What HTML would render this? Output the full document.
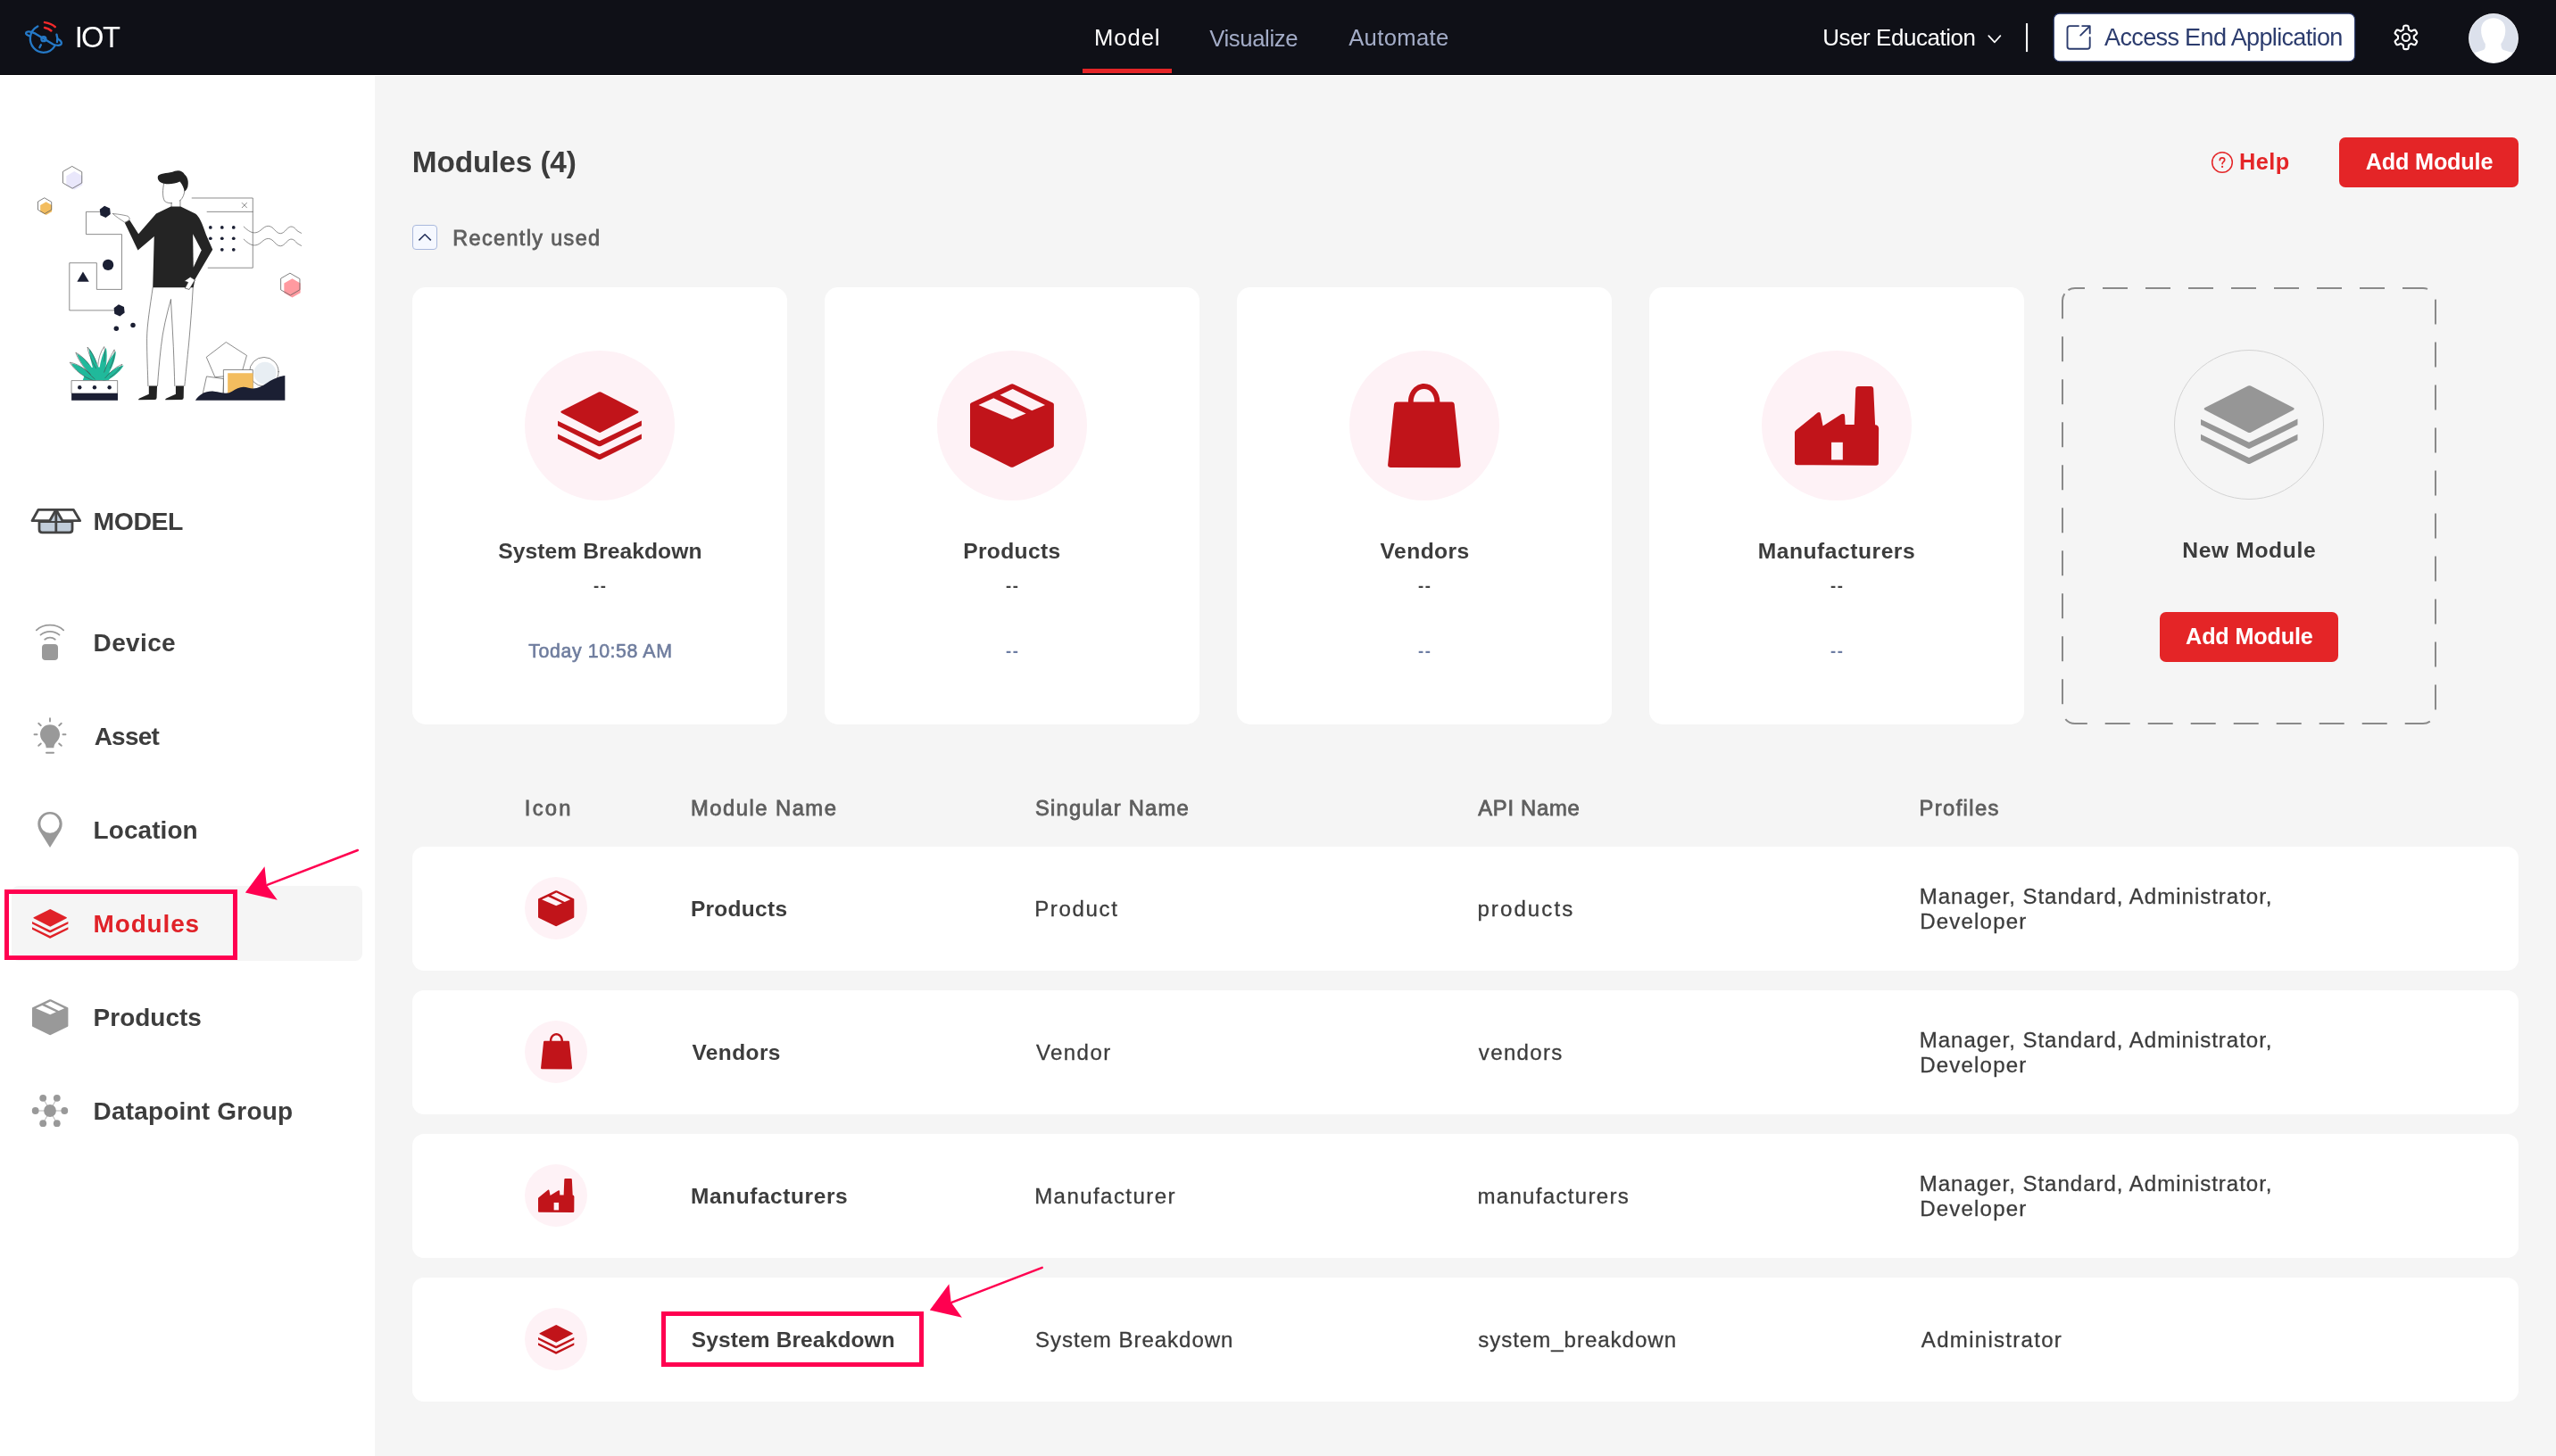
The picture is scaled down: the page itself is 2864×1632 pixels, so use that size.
<!DOCTYPE html>
<html lang="en"><head><meta charset="utf-8"><title>IOT - Modules</title>
<style>
html,body{margin:0;padding:0;}
body{width:2864px;height:1632px;overflow:hidden;background:#f5f5f5;font-family:"Liberation Sans",sans-serif;}
#app{position:relative;width:2864px;height:1632px;overflow:hidden;will-change:transform;}
.t{position:absolute;white-space:nowrap;line-height:1;}
.abs{position:absolute;}
svg{position:absolute;overflow:visible;}
#topbar{position:absolute;left:0;top:0;width:2864px;height:84px;background:#0f1017;border-bottom:0;}
#sidebar{position:absolute;left:0;top:84px;width:420px;height:1548px;background:#ffffff;}
.card{position:absolute;background:#fff;border-radius:15px;width:420px;height:490px;top:322px;}
.circ{position:absolute;border-radius:50%;background:#fef2f6;}
.row{position:absolute;left:462px;width:2360px;height:139px;background:#fff;border-radius:13px;}
.btn{position:absolute;background:#e42527;border-radius:7px;}
@media (max-width:2000px){html{zoom:0.5;}}

</style></head><body>
<div id="app">
<div id="topbar"></div>
<div class="abs" style="left:0;top:82.800px;width:2864px;height:1.200px;background:#000005"></div>
<div class="abs" style="left:420px;top:84px;width:2444px;height:1.300px;background:#ffffff"></div>
<svg style="left:20px;top:15px" width="70" height="55" viewBox="0 0 1853 1456" fill="none" stroke-linecap="round" stroke-linejoin="round">
<g stroke="#2579c7" stroke-width="62">
<path d="M590 385 C470 450 390 560 370 690 C340 960 540 1160 760 1160 C900 1160 1030 1080 1100 960"/>
<path d="M1150 625 C1175 700 1180 780 1165 850"/>
<path d="M370 680 C280 650 220 610 245 570 C280 520 400 545 520 600 L1050 920 C1150 960 1270 960 1290 905 C1305 860 1260 800 1190 760"/>
<circle cx="765" cy="760" r="66"/>
<path d="M685 935 L645 1010"/>
</g>
<g stroke="#f62a2b" stroke-width="66">
<path d="M795 268 C910 285 1030 330 1105 400"/>
<path d="M795 422 C870 440 940 470 990 515"/>
</g>
</svg>
<span class="t" style="left:83.65px;top:26.06px;font-size:32.75px;font-weight:400;color:#ffffff;letter-spacing:-1.666px;">IOT</span>
<span class="t" style="left:1226.05px;top:30.40px;font-size:25.65px;font-weight:400;color:#ffffff;letter-spacing:0.911px;">Model</span>
<div class="abs" style="left:1213px;top:77px;width:100px;height:5px;background:#e42527"></div>
<span class="t" style="left:1355.27px;top:31.40px;font-size:25.65px;font-weight:400;color:#a3acc7;letter-spacing:-0.368px;">Visualize</span>
<span class="t" style="left:1511.20px;top:30.40px;font-size:25.65px;font-weight:400;color:#a3acc7;letter-spacing:0.323px;">Automate</span>
<span class="t" style="left:2042.15px;top:30.15px;font-size:25.94px;font-weight:400;color:#ffffff;letter-spacing:-0.422px;">User Education</span>
<svg style="left:0;top:0" width="2864" height="84" viewBox="0 0 2864 84" fill="none">
<path d="M2228.300 40.100 L2235 47.300 L2241.400 40.100" stroke="#fff" stroke-width="1.700" stroke-linecap="round" stroke-linejoin="round"/>
<rect x="2270" y="26.100" width="2.100" height="32" fill="#fff"/>
<rect x="2301.250" y="15.150" width="337.400" height="53.600" rx="6.500" fill="#fff" stroke="#2c3c6e" stroke-width="1.200"/>
<g stroke="#2c3c6e" stroke-width="1.900" stroke-linecap="round" stroke-linejoin="round">
<path d="M2329 29.100 H2319.300 Q2316.500 29.100 2316.500 31.900 V51.900 Q2316.500 54.700 2319.300 54.700 H2338.900 Q2341.700 54.700 2341.700 51.900 V42"/>
<path d="M2331.200 39.600 L2341.500 29.300 M2333.200 29.100 H2341.700 V37.400"/>
</g>
</svg>
<span class="t" style="left:2358.00px;top:27.66px;font-size:27.10px;font-weight:400;color:#2c3c6e;letter-spacing:-0.679px;">Access End Application</span>
<svg style="left:2676px;top:22px" width="40" height="40" viewBox="0 0 40 40" fill="none" stroke="#fff" stroke-width="2.1" stroke-linejoin="round"><path d="M28.85 19.90 L28.84 20.21 L28.83 20.52 L28.80 20.84 L28.77 21.15 L28.91 21.49 L29.40 21.92 L30.18 22.46 L31.06 23.10 L31.78 23.76 L32.17 24.36 L32.18 24.86 L32.00 25.29 L31.81 25.71 L31.60 26.12 L31.37 26.52 L31.14 26.92 L30.88 27.31 L30.62 27.69 L30.34 28.06 L29.90 28.29 L29.18 28.26 L28.25 27.96 L27.26 27.52 L26.40 27.11 L25.78 26.91 L25.41 26.95 L25.16 27.14 L24.90 27.32 L24.64 27.49 L24.38 27.65 L24.10 27.80 L23.82 27.94 L23.54 28.08 L23.25 28.20 L23.03 28.50 L22.90 29.13 L22.82 30.08 L22.71 31.16 L22.50 32.12 L22.17 32.75 L21.74 33.02 L21.29 33.08 L20.82 33.12 L20.36 33.14 L19.90 33.15 L19.44 33.14 L18.98 33.12 L18.51 33.08 L18.06 33.02 L17.63 32.75 L17.30 32.12 L17.09 31.16 L16.98 30.08 L16.90 29.13 L16.77 28.50 L16.55 28.20 L16.26 28.08 L15.98 27.94 L15.70 27.80 L15.43 27.65 L15.16 27.49 L14.90 27.32 L14.64 27.14 L14.39 26.95 L14.02 26.91 L13.40 27.11 L12.54 27.52 L11.55 27.96 L10.62 28.26 L9.90 28.29 L9.46 28.06 L9.18 27.69 L8.92 27.31 L8.66 26.92 L8.43 26.52 L8.20 26.12 L7.99 25.71 L7.80 25.29 L7.62 24.86 L7.63 24.36 L8.02 23.76 L8.74 23.10 L9.62 22.46 L10.40 21.92 L10.89 21.49 L11.03 21.15 L11.00 20.84 L10.97 20.52 L10.96 20.21 L10.95 19.90 L10.96 19.59 L10.97 19.28 L11.00 18.96 L11.03 18.65 L10.89 18.31 L10.40 17.88 L9.62 17.34 L8.74 16.70 L8.02 16.04 L7.63 15.44 L7.62 14.94 L7.80 14.51 L7.99 14.09 L8.20 13.68 L8.43 13.27 L8.66 12.88 L8.92 12.49 L9.18 12.11 L9.46 11.74 L9.90 11.51 L10.62 11.54 L11.55 11.84 L12.54 12.28 L13.40 12.69 L14.02 12.89 L14.39 12.85 L14.64 12.66 L14.90 12.48 L15.16 12.31 L15.42 12.15 L15.70 12.00 L15.98 11.86 L16.26 11.72 L16.55 11.60 L16.77 11.30 L16.90 10.67 L16.98 9.72 L17.09 8.64 L17.30 7.68 L17.63 7.05 L18.06 6.78 L18.51 6.72 L18.98 6.68 L19.44 6.66 L19.90 6.65 L20.36 6.66 L20.82 6.68 L21.29 6.72 L21.74 6.78 L22.17 7.05 L22.50 7.68 L22.71 8.64 L22.82 9.72 L22.90 10.67 L23.03 11.30 L23.25 11.60 L23.54 11.72 L23.82 11.86 L24.10 12.00 L24.38 12.15 L24.64 12.31 L24.90 12.48 L25.16 12.66 L25.41 12.85 L25.78 12.89 L26.40 12.69 L27.26 12.28 L28.25 11.84 L29.18 11.54 L29.90 11.51 L30.34 11.74 L30.62 12.11 L30.88 12.49 L31.14 12.88 L31.37 13.27 L31.60 13.68 L31.81 14.09 L32.00 14.51 L32.18 14.94 L32.17 15.44 L31.78 16.04 L31.06 16.70 L30.18 17.34 L29.40 17.88 L28.91 18.31 L28.77 18.65 L28.80 18.96 L28.83 19.28 L28.84 19.59 Z"/><circle cx="19.9" cy="19.9" r="4.1"/></svg>
<svg style="left:2766.1px;top:14.7px" width="56" height="56" viewBox="0 0 56 56"><defs><clipPath id="avc"><circle cx="28" cy="28" r="27.2"/></clipPath></defs><circle cx="28" cy="28" r="27.7" fill="#dce1ec"/><g clip-path="url(#avc)" fill="#fff"><path d="M27.9 5.2 C35 5.2 41.3 10 41.3 18.4 C41.3 23 40.5 26 39.4 28.4 C38.5 31 37 33 36.3 34 L36.6 37.1 C37 39.5 38 40.5 39.1 40.9 L47.3 43.4 L53 44.5 L53 58 L3 58 L3 44.5 L9.1 43.4 L16.6 40.9 C17.8 40.5 18.6 39.5 18.8 37.1 L18.8 34 C18 33 16.8 31 16 28.4 C15 26 14.1 23 14.1 18.4 C14.1 10 20.5 5.2 27.9 5.2 Z"/></g><circle cx="28" cy="28" r="27.4" fill="none" stroke="#f3f4f8" stroke-width="0.8"/></svg>
<div id="sidebar"></div>
<svg style="left:20px;top:160px" width="360" height="320" viewBox="0 0 1638 1456" fill="none" stroke-linejoin="round" stroke-linecap="round">
<!-- floating hexagons -->
<polygon points="288.0,146.0 328.7,169.5 328.7,216.5 288.0,240.0 247.3,216.5 247.3,169.5" fill="#e9e7fb"/>
<polygon points="278.0,121.0 326.5,149.0 326.5,205.0 278.0,233.0 229.5,205.0 229.5,149.0" stroke="#5a5a5a" stroke-width="3.5"/>
<polygon points="144.0,301.0 173.4,318.0 173.4,352.0 144.0,369.0 114.6,352.0 114.6,318.0" fill="#f3bd5f"/>
<polygon points="137.0,282.0 171.6,302.0 171.6,342.0 137.0,362.0 102.4,342.0 102.4,302.0" stroke="#5a5a5a" stroke-width="3.5"/>
<polygon points="1399.0,693.0 1440.6,717.0 1440.6,765.0 1399.0,789.0 1357.4,765.0 1357.4,717.0" fill="#ff9aa0"/>
<polygon points="1389.0,666.0 1437.5,694.0 1437.5,750.0 1389.0,778.0 1340.5,750.0 1340.5,694.0" stroke="#5a5a5a" stroke-width="3.5"/>
<!-- browser window -->
<g stroke="#6a6a6a" stroke-width="3.5">
<path d="M888 282 H1198 V638 H970"/>
<path d="M965 352 H1198"/>
<path d="M1143 307 L1167 331 M1167 307 L1143 331"/>
</g>
<g fill="#1b1f33">
<circle cx="982" cy="432" r="8.5"/><circle cx="1041" cy="432" r="8.5"/><circle cx="1100" cy="432" r="8.5"/>
<circle cx="982" cy="488" r="8.5"/><circle cx="1041" cy="488" r="8.5"/><circle cx="1100" cy="488" r="8.5"/>
<circle cx="1041" cy="545" r="8.5"/><circle cx="1100" cy="545" r="8.5"/>
</g>
<g stroke="#5f5f5f" stroke-width="3.2">
<path d="M1152 428 C1185 462 1212 470 1242 443 C1266 420 1286 417 1310 445 C1332 470 1348 468 1370 442 C1390 420 1405 424 1425 450 L1445 461"/>
<path d="M1152 492 C1185 526 1212 534 1242 507 C1266 484 1286 481 1310 509 C1332 534 1348 532 1370 506 C1390 484 1405 488 1425 514 L1445 525"/>
</g>
<!-- connector -->
<path d="M430 352 H348 V467 H530 V748 H402 V613 H263 V855 H500" stroke="#6a6a6a" stroke-width="3.5"/>
<polygon points="445.0,322.0 471.0,337.0 471.0,367.0 445.0,382.0 419.0,367.0 419.0,337.0" fill="#1b1f33" transform="rotate(-6 445 352)"/>
<polygon points="517.0,825.0 543.0,840.0 543.0,870.0 517.0,885.0 491.0,870.0 491.0,840.0" fill="#1b1f33" transform="rotate(-6 517 855)"/>
<circle cx="460" cy="623" r="28" fill="#1b1f33"/>
<polygon points="332,657 363,709 302,709" fill="#1b1f33"/>
<circle cx="502" cy="948" r="12.5" fill="#1b1f33"/><circle cx="587" cy="930" r="12.5" fill="#1b1f33"/>
<!-- person -->
<path d="M745 205 C738 240 736 275 748 297 C760 308 775 308 785 308 M850 240 C850 262 842 282 826 296" stroke="#5a5a5a" stroke-width="3.2"/>
<path d="M783 306 V328 M828 294 V328" stroke="#5a5a5a" stroke-width="3.2"/>
<path d="M715 168 C735 152 770 158 800 145 C822 138 842 145 850 162 C866 175 872 200 866 225 C862 238 856 244 850 248 C846 232 840 215 826 198 C800 210 770 214 745 208 C722 204 708 186 715 168 Z" fill="#222"/>
<path d="M485 362 C515 364 545 370 560 374 C570 380 572 390 566 396 L545 406 C525 392 500 378 485 362 Z" fill="#fff" stroke="#5a5a5a" stroke-width="3"/>
<path d="M780 325 L830 325 L905 362 C932 382 946 432 960 470 L993 545 L903 697 L895 738 L688 738 L695 478 L612 548 L545 408 L570 395 L615 465 L705 362 Z" fill="#242424"/>
<path d="M892.5 465 L936 548 L895 636 Z" fill="#fff"/>
<path d="M880 685 L903 700 L874 748 L852 742 L868 712 L850 705 Z" fill="#fff" stroke="#333" stroke-width="3"/>
<g stroke="#5a5a5a" stroke-width="3.2">
<path d="M688 738 C675 830 658 930 658 1000 C658 1090 662 1170 664 1240"/>
<path d="M780 800 C760 870 738 960 730 1040 C722 1110 716 1180 712 1240"/>
<path d="M780 800 C784 880 790 960 793 1040 C796 1110 798 1180 800 1240"/>
<path d="M893 738 C888 830 880 930 872 1020 C864 1100 856 1180 850 1240"/>
</g>
<path d="M668 1240 H710 L708 1300 Q708 1310 698 1310 L615 1312 Q612 1308 620 1304 L668 1282 Z" fill="#222"/>
<path d="M805 1240 H846 L845 1300 Q845 1310 835 1310 L752 1312 Q749 1308 757 1304 L805 1282 Z" fill="#222"/>
<!-- plant -->
<g fill="#20b99b">
<path d="M331 1212 L345 1172 L372 1150 L392 1140 L441 1150 L484 1186 L462 1212 Z"/>
<path d="M392 1215 C340 1200 290 1160 272 1125 C320 1135 372 1170 400 1212 Z"/>
<path d="M400 1212 C350 1170 312 1110 300 1075 C350 1100 392 1160 412 1210 Z"/>
<path d="M405 1212 C380 1150 365 1090 362 1048 C395 1085 415 1150 420 1212 Z"/>
<path d="M412 1212 C412 1150 425 1085 450 1045 C460 1095 448 1160 430 1212 Z"/>
<path d="M420 1212 C440 1150 470 1095 500 1062 C498 1115 470 1170 440 1212 Z"/>
<path d="M430 1214 C462 1170 505 1140 540 1135 C515 1175 475 1205 440 1216 Z"/>
</g>
<g stroke="#444" stroke-width="2.6">
<path d="M385 1213 C335 1196 285 1156 265 1120 C300 1126 340 1150 370 1180"/>
<path d="M392 1205 C345 1165 308 1108 295 1070 C320 1082 345 1106 362 1130"/>
<path d="M398 1150 C375 1110 360 1075 355 1042 C375 1065 392 1095 402 1125"/>
<path d="M408 1140 C410 1100 422 1065 440 1040 C446 1062 445 1090 440 1115"/>
<path d="M440 1170 C455 1125 475 1085 492 1055 C495 1085 485 1120 470 1150"/>
<path d="M445 1200 C475 1165 505 1140 532 1130 C520 1155 498 1178 470 1196"/>
</g>
<rect x="275" y="1213" width="233" height="66" fill="#fff" stroke="#555" stroke-width="3"/>
<rect x="273.500" y="1278" width="236" height="36" fill="#1b1f33"/>
<circle cx="315" cy="1248" r="10" fill="#1b1f33"/><circle cx="391" cy="1248" r="10" fill="#1b1f33"/><circle cx="467" cy="1248" r="10" fill="#1b1f33"/>
<!-- shapes right -->
<g stroke="#5a5a5a" stroke-width="3.2">
<polygon points="1063,1018 1167,1085 1138,1185 1005,1195 962,1095" fill="#fff"/>
<polygon points="964,1192 1050,1204 1046,1290 945,1278" fill="#fff"/>
<circle cx="1255" cy="1168" r="74" fill="#fff"/>
</g>
<circle cx="1260" cy="1175" r="57" fill="#e8eef3"/>
<rect x="1050" y="1158" width="148" height="125" fill="#fff" stroke="#5a5a5a" stroke-width="3.2"/>
<rect x="1070" y="1175" width="129" height="108" fill="#f3bd5f"/>
<path d="M905 1314 C925 1282 960 1264 1000 1268 C1040 1272 1062 1286 1092 1268 C1120 1250 1142 1238 1176 1250 C1212 1260 1242 1244 1272 1224 C1310 1200 1340 1190 1362 1188 L1362 1314 Z" fill="#1b1f33"/>
</svg>
<svg style="left:30px;top:565px" width="66" height="38" viewBox="0 0 66 38" fill="none" stroke="#444" stroke-width="2.8" stroke-linejoin="round" stroke-linecap="round">
<path d="M14 19.5 V28.500 Q14 31.8 17.3 31.8 H47.7 Q51 31.8 51 28.500 V19.5 Z" fill="#c1cdda"/>
<path d="M32.800 7 L25.700 19 H40 Z" fill="#c1cdda" stroke="none"/>
<path d="M13 6.3 H32.800 L25.700 18.700 H6 Z" fill="#fff"/>
<path d="M32.800 6.3 H52.300 L59.700 18.700 H40 Z" fill="#fff"/>
<path d="M32.800 8 V31.500"/>
</svg>
<span class="t" style="left:104.55px;top:569.66px;font-size:28.41px;font-weight:700;color:#3d3d3d;letter-spacing:-0.412px;">MODEL</span>
<svg style="left:30px;top:694px" width="52" height="52" viewBox="0 0 52 52" fill="none" stroke="#9a9a9a" stroke-width="1.8" stroke-linecap="round">
<rect x="17" y="28" width="18" height="18" rx="4" fill="#999" stroke="none"/>
<path d="M10.800 12.400 C19 4.800 33 4.800 41.200 12.400"/>
<path d="M15.500 17.600 C21.500 12.500 30.500 12.500 36.500 17.600"/>
<path d="M20.200 22.700 C23.500 19.900 28.500 19.900 31.800 22.700"/>
</svg>
<span class="t" style="left:104.58px;top:707.12px;font-size:27.97px;font-weight:700;color:#3d3d3d;letter-spacing:0.378px;">Device</span>
<svg style="left:30px;top:797px" width="52" height="52" viewBox="0 0 52 52" fill="#999" stroke="#999" stroke-width="2" stroke-linecap="round">
<path d="M26 15.200 C19.800 15.200 15 20 15 26.200 C15 30.500 17.500 33.500 19.500 35.500 C20.800 37 21.500 38.500 21.700 41.200 H30.300 C30.500 38.500 31.200 37 32.500 35.500 C34.500 33.500 37 30.500 37 26.200 C37 20 32.200 15.200 26 15.200 Z" stroke="none"/>
<path d="M22 46.800 H30"/>
<path d="M26 8.200 V11.500 M13.200 13.800 L15.800 16.200 M38.800 13.800 L36.200 16.200 M8.500 26.300 H11.500 M40.500 26.300 H43.500 M13.200 38.800 L15.800 36.500 M38.800 38.800 L36.200 36.500" stroke-width="1.9"/>
</svg>
<span class="t" style="left:105.70px;top:812.12px;font-size:27.97px;font-weight:700;color:#3d3d3d;letter-spacing:-0.776px;">Asset</span>
<svg style="left:30px;top:904px" width="52" height="52" viewBox="0 0 52 52">
<path fill-rule="evenodd" fill="#999" d="M26 6 C18.300 6 12.300 12 12.300 19.600 C12.300 24 14 27 16 30 L26 46 L36 30 C38 27 39.700 24 39.700 19.600 C39.700 12 33.700 6 26 6 Z M26 8.600 A10.600 10.600 0 1 1 26 29.800 A10.600 10.600 0 1 1 26 8.600 Z"/>
</svg>
<span class="t" style="left:104.58px;top:917.12px;font-size:27.97px;font-weight:700;color:#3d3d3d;letter-spacing:0.085px;">Location</span>
<div class="abs" style="left:13px;top:992.8px;width:392.6px;height:84.2px;background:#f5f5f5;border-radius:8px"></div>
<svg style="left:36px;top:1018.5px" width="40.4" height="32.8" viewBox="357 425 743 605" preserveAspectRatio="none" fill="#e02228">
<path d="M720 429 Q730 424 740 429 L1068 597 Q1080 605 1068 613 L740 786 Q730 791 720 786 L388 613 Q376 605 388 597 Z"/>
<path d="M357 685 L727 862 L1100 682 L1100 728 L740 907 Q727 914 714 907 L357 728 Z"/>
<path d="M357 800 L727 980 L1100 800 L1100 845 L740 1025 Q727 1032 714 1025 L357 845 Z"/>
</svg>
<span class="t" style="left:104.58px;top:1022.12px;font-size:27.97px;font-weight:700;color:#e02228;letter-spacing:0.852px;">Modules</span>
<svg style="left:36px;top:1120px" width="40.4" height="40.4" viewBox="357 355 743 745" preserveAspectRatio="none">
<path fill="#999" d="M716 361 Q730 354 744 361 L1090 525 Q1100 530 1100 541 L1100 905 Q1100 915 1091 920 L741 1094 Q728 1100 715 1094 L366 920 Q357 915 357 905 L357 541 Q357 530 367 525 Z"/>
<polygon fill="#fff" points="432,545 565,483 852,620 730,672"/>
<polygon fill="#fff" points="622,455 735,402 1022,545 905,595"/>
</svg>
<span class="t" style="left:104.58px;top:1127.12px;font-size:27.97px;font-weight:700;color:#3d3d3d;letter-spacing:0.012px;">Products</span>
<svg style="left:30px;top:1219px" width="52" height="52" viewBox="0 0 52 52" fill="#999" stroke="#aaa" stroke-width="0.9">
<path d="M26 26 L18.200 11.800 M26 26 L33.800 11.800 M26 26 L9.700 26 M26 26 L42.300 26 M26 26 L18.200 40.200 M26 26 L33.800 40.200" fill="none"/>
<g stroke="none"><circle cx="26" cy="26" r="6.900"/>
<circle cx="18.200" cy="11.800" r="3.900"/><circle cx="33.800" cy="11.800" r="3.900"/><circle cx="9.700" cy="26" r="3.900"/><circle cx="42.300" cy="26" r="3.900"/><circle cx="18.200" cy="40.200" r="3.900"/><circle cx="33.800" cy="40.200" r="3.900"/></g>
</svg>
<span class="t" style="left:104.58px;top:1232.12px;font-size:27.97px;font-weight:700;color:#3d3d3d;letter-spacing:0.203px;">Datapoint Group</span>
<span class="t" style="left:461.83px;top:164.57px;font-size:33.33px;font-weight:700;color:#3c3c3c;letter-spacing:-0.110px;">Modules (4)</span>
<div class="abs" style="left:462px;top:252px;width:28px;height:28px;box-sizing:border-box;border:1.2px solid #a9b8dc;background:#f5f8ff;border-radius:4px"></div>
<svg style="left:462px;top:252px" width="28" height="28" viewBox="0 0 28 28" fill="none" stroke="#232f5a" stroke-width="1.5" stroke-linecap="butt" stroke-linejoin="round"><path d="M7.400 17.400 L14.100 10.700 L20.800 17.400"/></svg>
<span class="t" style="left:507.33px;top:255.57px;font-size:23.33px;font-weight:400;color:#5e5e5e;letter-spacing:1.406px;-webkit-text-stroke:0.8px #5e5e5e;">Recently used</span>
<svg style="left:2477px;top:169px" width="26" height="26" viewBox="0 0 26 26" fill="none" stroke="#e42527" stroke-width="1.500"><circle cx="13" cy="13" r="11.300"/><path d="M10.300 10.500 C10.300 8.800 11.500 7.900 13 7.900 C14.600 7.900 15.700 8.900 15.700 10.200 C15.700 12.300 13.100 12.300 13.100 14.600" stroke-width="1.700" stroke-linecap="round"/><circle cx="13.100" cy="17.900" r="1.100" fill="#e42527" stroke="none"/></svg>
<span class="t" style="left:2509.05px;top:168.54px;font-size:25.36px;font-weight:700;color:#e42527;letter-spacing:0.451px;">Help</span>
<div class="btn" style="left:2621px;top:154px;width:201px;height:56px"></div>
<span class="t" style="left:2650.77px;top:168.57px;font-size:25.22px;font-weight:700;color:#ffffff;letter-spacing:-0.181px;">Add Module</span>
<div class="card" style="left:462px"></div>
<div class="circ" style="left:588px;top:393px;width:168px;height:168px"></div>
<svg style="left:625.12px;top:438.71px" width="93.9" height="76.46" viewBox="357 425 743 605" preserveAspectRatio="none" fill="#c1141a">
<path d="M720 429 Q730 424 740 429 L1068 597 Q1080 605 1068 613 L740 786 Q730 791 720 786 L388 613 Q376 605 388 597 Z"/>
<path d="M357 685 L727 862 L1100 682 L1100 728 L740 907 Q727 914 714 907 L357 728 Z"/>
<path d="M357 800 L727 980 L1100 800 L1100 845 L740 1025 Q727 1032 714 1025 L357 845 Z"/>
</svg>
<span class="t" style="left:558.16px;top:606.06px;font-size:24.64px;font-weight:700;color:#3c3c3c;letter-spacing:0.076px;">System Breakdown</span>
<span class="t" style="left:664.96px;top:647.93px;font-size:18.55px;font-weight:700;color:#444;letter-spacing:1.655px;">--</span>
<span class="t" style="left:592.32px;top:719.79px;font-size:21.30px;font-weight:400;color:#6f7d9e;letter-spacing:0.606px;-webkit-text-stroke:0.6px #6f7d9e;">Today 10:58 AM</span>
<div class="card" style="left:924px"></div>
<div class="circ" style="left:1050px;top:393px;width:168px;height:168px"></div>
<svg style="left:1087.12px;top:429.86px" width="93.9" height="94.15" viewBox="357 355 743 745" preserveAspectRatio="none">
<path fill="#c1141a" d="M716 361 Q730 354 744 361 L1090 525 Q1100 530 1100 541 L1100 905 Q1100 915 1091 920 L741 1094 Q728 1100 715 1094 L366 920 Q357 915 357 905 L357 541 Q357 530 367 525 Z"/>
<polygon fill="#fef2f6" points="432,545 565,483 852,620 730,672"/>
<polygon fill="#fef2f6" points="622,455 735,402 1022,545 905,595"/>
</svg>
<span class="t" style="left:1079.20px;top:606.06px;font-size:24.64px;font-weight:700;color:#3c3c3c;letter-spacing:0.312px;">Products</span>
<span class="t" style="left:1126.96px;top:647.93px;font-size:18.55px;font-weight:700;color:#444;letter-spacing:1.655px;">--</span>
<span class="t" style="left:1126.96px;top:720.73px;font-size:18.55px;font-weight:700;color:#6d7da3;letter-spacing:1.655px;">--</span>
<div class="card" style="left:1386px"></div>
<div class="circ" style="left:1512px;top:393px;width:168px;height:168px"></div>
<svg style="left:1555.18px;top:429.86px" width="81.76" height="94.15" viewBox="405 355 647 745" preserveAspectRatio="none">
<path fill="#c1141a" fill-rule="evenodd" d="M587 518 C587 425 650 355 727 355 C805 355 867 425 867 518 L975 518 Q994 518 996 538 L1052 1075 Q1054 1100 1030 1100 L428 1098 Q403 1098 406 1073 L461 538 Q463 518 482 518 Z M632 518 L820 518 C820 450 780 402 727 402 C672 402 632 450 632 518 Z"/>
</svg>
<span class="t" style="left:1546.58px;top:606.06px;font-size:24.64px;font-weight:700;color:#3c3c3c;letter-spacing:0.419px;">Vendors</span>
<span class="t" style="left:1588.96px;top:647.93px;font-size:18.55px;font-weight:700;color:#444;letter-spacing:1.655px;">--</span>
<span class="t" style="left:1588.96px;top:720.73px;font-size:18.55px;font-weight:700;color:#6d7da3;letter-spacing:1.655px;">--</span>
<div class="card" style="left:1848px"></div>
<div class="circ" style="left:1974px;top:393px;width:168px;height:168px"></div>
<svg style="left:2011.12px;top:433.02px" width="94.15" height="88.71" viewBox="357 380 745 702" preserveAspectRatio="none">
<path fill="#c1141a" d="M357 790 Q357 778 368 770 L560 614 Q580 600 586 624 L607 732 L770 628 Q798 612 801 642 L805 720 L885 720 L897 400 Q898 380 918 380 L1035 380 Q1054 380 1055 400 L1070 722 Q1100 722 1102 752 L1100 1060 Q1100 1082 1078 1082 L378 1078 Q357 1078 357 1057 Z"/>
<rect fill="#fef2f6" x="682" y="877" width="101" height="155"/>
</svg>
<span class="t" style="left:1969.65px;top:606.06px;font-size:24.64px;font-weight:700;color:#3c3c3c;letter-spacing:0.528px;">Manufacturers</span>
<span class="t" style="left:2050.96px;top:647.93px;font-size:18.55px;font-weight:700;color:#444;letter-spacing:1.655px;">--</span>
<span class="t" style="left:2050.96px;top:720.73px;font-size:18.55px;font-weight:700;color:#6d7da3;letter-spacing:1.655px;">--</span>
<svg style="left:2310px;top:322px" width="420" height="490" viewBox="0 0 420 490" fill="none"><path d="M15 1 H405 A14 14 0 0 1 419 15 V475 A14 14 0 0 1 405 489 H15 A14 14 0 0 1 1 475 V15 A14 14 0 0 1 15 1" stroke="#8a8a8a" stroke-width="2" stroke-dasharray="11.00 20.00 28.00 20.00 28.00 20.00 28.00 20.00 28.00 20.00 28.00 20.00 28.00 20.00 28.00 20.00 28.11 15.28 28.00 20.00 28.00 20.00 28.00 20.00 28.00 20.00 28.00 20.00 28.00 20.00 28.00 20.00 28.00 20.00 28.00 20.00 28.00 15.08 28.52 20.00 28.00 20.00 28.00 20.00 28.00 20.00 28.00 20.00 28.00 20.00 28.00 20.00 28.00 19.90 25.82 17.67 28.00 20.00 28.00 20.00 28.00 20.00 28.00 20.00 28.00 20.00 28.00 20.00 28.00 20.00 28.00 20.00 28.00 20.00 28.40 5.68 8.52 0.00"/></svg>
<div class="abs" style="left:2436px;top:392px;width:168px;height:168px;box-sizing:border-box;border:1.200px solid #d2d2d2;border-radius:50%"></div>
<svg style="left:2465.83px;top:432.26px" width="108.48" height="88.33" viewBox="357 425 743 605" preserveAspectRatio="none" fill="#969696">
<path d="M720 429 Q730 424 740 429 L1068 597 Q1080 605 1068 613 L740 786 Q730 791 720 786 L388 613 Q376 605 388 597 Z"/>
<path d="M357 685 L727 862 L1100 682 L1100 728 L740 907 Q727 914 714 907 L357 728 Z"/>
<path d="M357 800 L727 980 L1100 800 L1100 845 L740 1025 Q727 1032 714 1025 L357 845 Z"/>
</svg>
<span class="t" style="left:2445.30px;top:605.36px;font-size:24.64px;font-weight:700;color:#3c3c3c;letter-spacing:0.625px;">New Module</span>
<div class="btn" style="left:2420px;top:686px;width:200px;height:56px"></div>
<span class="t" style="left:2449.12px;top:701.47px;font-size:25.22px;font-weight:700;color:#ffffff;letter-spacing:-0.181px;">Add Module</span>
<span class="t" style="left:587.86px;top:893.50px;font-size:23.77px;font-weight:400;color:#5e5e5e;letter-spacing:2.254px;-webkit-text-stroke:0.8px #5e5e5e;">Icon</span>
<span class="t" style="left:774.00px;top:893.50px;font-size:23.77px;font-weight:400;color:#5e5e5e;letter-spacing:1.491px;-webkit-text-stroke:0.8px #5e5e5e;">Module Name</span>
<span class="t" style="left:1160.03px;top:893.50px;font-size:23.77px;font-weight:400;color:#5e5e5e;letter-spacing:1.209px;-webkit-text-stroke:0.8px #5e5e5e;">Singular Name</span>
<span class="t" style="left:1656.30px;top:893.50px;font-size:23.77px;font-weight:400;color:#5e5e5e;letter-spacing:0.715px;-webkit-text-stroke:0.8px #5e5e5e;">API Name</span>
<span class="t" style="left:2150.50px;top:893.50px;font-size:23.77px;font-weight:400;color:#5e5e5e;letter-spacing:1.381px;-webkit-text-stroke:0.8px #5e5e5e;">Profiles</span>
<div class="row" style="top:949px"></div>
<div class="circ" style="left:588.2px;top:983.1px;width:69.8px;height:69.8px"></div>
<svg style="left:602.98px;top:997.77px" width="40.3" height="40.41" viewBox="357 355 743 745" preserveAspectRatio="none">
<path fill="#c1141a" d="M716 361 Q730 354 744 361 L1090 525 Q1100 530 1100 541 L1100 905 Q1100 915 1091 920 L741 1094 Q728 1100 715 1094 L366 920 Q357 915 357 905 L357 541 Q357 530 367 525 Z"/>
<polygon fill="#fef2f6" points="432,545 565,483 852,620 730,672"/>
<polygon fill="#fef2f6" points="622,455 735,402 1022,545 905,595"/>
</svg>
<span class="t" style="left:773.91px;top:1007.08px;font-size:24.49px;font-weight:700;color:#3c3c3c;letter-spacing:0.285px;">Products</span>
<span class="t" style="left:1159.13px;top:1007.30px;font-size:24.06px;font-weight:400;color:#3c3c3c;letter-spacing:1.644px;-webkit-text-stroke:0.3px #3c3c3c;">Product</span>
<span class="t" style="left:1655.39px;top:1007.30px;font-size:24.06px;font-weight:400;color:#3c3c3c;letter-spacing:2.092px;-webkit-text-stroke:0.3px #3c3c3c;">products</span>
<span class="t" style="left:2150.73px;top:993.40px;font-size:24.06px;font-weight:400;color:#3c3c3c;letter-spacing:0.976px;-webkit-text-stroke:0.3px #3c3c3c;">Manager, Standard, Administrator,</span>
<span class="t" style="left:2151.13px;top:1020.60px;font-size:24.06px;font-weight:400;color:#3c3c3c;letter-spacing:1.200px;-webkit-text-stroke:0.3px #3c3c3c;">Developer</span>
<div class="row" style="top:1110px"></div>
<div class="circ" style="left:588.2px;top:1144.1px;width:69.8px;height:69.8px"></div>
<svg style="left:605.58px;top:1158.47px" width="35.09" height="40.41" viewBox="405 355 647 745" preserveAspectRatio="none">
<path fill="#c1141a" fill-rule="evenodd" d="M587 518 C587 425 650 355 727 355 C805 355 867 425 867 518 L975 518 Q994 518 996 538 L1052 1075 Q1054 1100 1030 1100 L428 1098 Q403 1098 406 1073 L461 538 Q463 518 482 518 Z M632 518 L820 518 C820 450 780 402 727 402 C672 402 632 450 632 518 Z"/>
</svg>
<span class="t" style="left:775.38px;top:1168.08px;font-size:24.49px;font-weight:700;color:#3c3c3c;letter-spacing:0.413px;">Vendors</span>
<span class="t" style="left:1160.93px;top:1168.30px;font-size:24.06px;font-weight:400;color:#3c3c3c;letter-spacing:1.408px;-webkit-text-stroke:0.3px #3c3c3c;">Vendor</span>
<span class="t" style="left:1656.83px;top:1168.30px;font-size:24.06px;font-weight:400;color:#3c3c3c;letter-spacing:1.336px;-webkit-text-stroke:0.3px #3c3c3c;">vendors</span>
<span class="t" style="left:2150.73px;top:1154.40px;font-size:24.06px;font-weight:400;color:#3c3c3c;letter-spacing:0.976px;-webkit-text-stroke:0.3px #3c3c3c;">Manager, Standard, Administrator,</span>
<span class="t" style="left:2151.13px;top:1181.60px;font-size:24.06px;font-weight:400;color:#3c3c3c;letter-spacing:1.200px;-webkit-text-stroke:0.3px #3c3c3c;">Developer</span>
<div class="row" style="top:1271px"></div>
<div class="circ" style="left:588.2px;top:1305.1px;width:69.8px;height:69.8px"></div>
<svg style="left:602.98px;top:1321.13px" width="40.41" height="38.07" viewBox="357 380 745 702" preserveAspectRatio="none">
<path fill="#c1141a" d="M357 790 Q357 778 368 770 L560 614 Q580 600 586 624 L607 732 L770 628 Q798 612 801 642 L805 720 L885 720 L897 400 Q898 380 918 380 L1035 380 Q1054 380 1055 400 L1070 722 Q1100 722 1102 752 L1100 1060 Q1100 1082 1078 1082 L378 1078 Q357 1078 357 1057 Z"/>
<rect fill="#fef2f6" x="682" y="877" width="101" height="155"/>
</svg>
<span class="t" style="left:773.91px;top:1329.08px;font-size:24.49px;font-weight:700;color:#3c3c3c;letter-spacing:0.585px;">Manufacturers</span>
<span class="t" style="left:1159.13px;top:1329.30px;font-size:24.06px;font-weight:400;color:#3c3c3c;letter-spacing:1.426px;-webkit-text-stroke:0.3px #3c3c3c;">Manufacturer</span>
<span class="t" style="left:1655.39px;top:1329.30px;font-size:24.06px;font-weight:400;color:#3c3c3c;letter-spacing:1.306px;-webkit-text-stroke:0.3px #3c3c3c;">manufacturers</span>
<span class="t" style="left:2150.73px;top:1315.40px;font-size:24.06px;font-weight:400;color:#3c3c3c;letter-spacing:0.976px;-webkit-text-stroke:0.3px #3c3c3c;">Manager, Standard, Administrator,</span>
<span class="t" style="left:2151.13px;top:1342.60px;font-size:24.06px;font-weight:400;color:#3c3c3c;letter-spacing:1.200px;-webkit-text-stroke:0.3px #3c3c3c;">Developer</span>
<div class="row" style="top:1432px"></div>
<div class="circ" style="left:588.2px;top:1466.1px;width:69.8px;height:69.8px"></div>
<svg style="left:602.98px;top:1484.57px" width="40.3" height="32.81" viewBox="357 425 743 605" preserveAspectRatio="none" fill="#c1141a">
<path d="M720 429 Q730 424 740 429 L1068 597 Q1080 605 1068 613 L740 786 Q730 791 720 786 L388 613 Q376 605 388 597 Z"/>
<path d="M357 685 L727 862 L1100 682 L1100 728 L740 907 Q727 914 714 907 L357 728 Z"/>
<path d="M357 800 L727 980 L1100 800 L1100 845 L740 1025 Q727 1032 714 1025 L357 845 Z"/>
</svg>
<span class="t" style="left:774.77px;top:1490.08px;font-size:24.49px;font-weight:700;color:#3c3c3c;letter-spacing:0.137px;">System Breakdown</span>
<span class="t" style="left:1159.97px;top:1490.30px;font-size:24.06px;font-weight:400;color:#3c3c3c;letter-spacing:0.952px;-webkit-text-stroke:0.3px #3c3c3c;">System Breakdown</span>
<span class="t" style="left:1656.23px;top:1490.30px;font-size:24.06px;font-weight:400;color:#3c3c3c;letter-spacing:0.975px;-webkit-text-stroke:0.3px #3c3c3c;">system_breakdown</span>
<span class="t" style="left:2152.85px;top:1490.30px;font-size:24.06px;font-weight:400;color:#3c3c3c;letter-spacing:1.280px;-webkit-text-stroke:0.3px #3c3c3c;">Administrator</span>
<div class="abs" style="left:5.400px;top:997.100px;width:260.500px;height:79.300px;box-sizing:border-box;border:5px solid #ff0050"></div>
<div class="abs" style="left:741px;top:1469.900px;width:294.200px;height:61.900px;box-sizing:border-box;border:5px solid #ff0050"></div>
<svg style="left:0;top:0" width="2864" height="1632" viewBox="0 0 2864 1632" fill="#ff0050" stroke="#ff0050">
<path d="M400.800 953 L299.500 991.800" stroke-width="2.500" fill="none" stroke-linecap="round"/>
<path d="M274.900 1000.600 L296.500 971.200 L298.800 992.200 L310.800 1008.800 Z" stroke="none"/>
<path d="M1167.700 1420.900 L1066.400 1459.800" stroke-width="2.500" fill="none" stroke-linecap="round"/>
<path d="M1041.800 1468.500 L1063.400 1439.300 L1065.700 1459.800 L1077.900 1476.800 Z" stroke="none"/>
</svg>
</div>
</body></html>
